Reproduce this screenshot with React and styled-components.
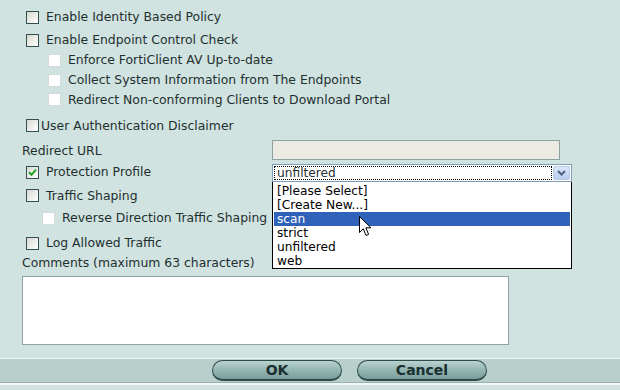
import React from 'react';
import styled, { createGlobalStyle, css } from 'styled-components';

const GlobalStyle = createGlobalStyle`
  html, body {
    margin: 0;
    padding: 0;
    background: #d0e3e1;
  }
  * {
    box-sizing: border-box;
  }
`;

const profiles = ['[Please Select]', '[Create New...]', 'scan', 'strict', 'unfiltered', 'web'];

const CheckMark = () => (
  <svg width="9" height="9" viewBox="0 0 9 9">
    <path d="M1 4.2 L3.5 6.8 L8 1.6" fill="none" stroke="#21a121" strokeWidth="2" />
  </svg>
);

const Pointer = () => (
  <svg width="14" height="22" viewBox="0 0 14 22">
    <path
      d="M0.5 0.5 L0.5 16.5 L4.3 12.8 L7 19.5 L9.6 18.4 L6.9 11.8 L12 11.8 Z"
      fill="#fff"
      stroke="#000"
      strokeWidth="1"
      strokeLinejoin="miter"
    />
  </svg>
);

const App = () => {
  return (
    <Page>
      <GlobalStyle />
      <Form>
        <Row $top={7}>
          <Box $indent={4} />
          <Label $gap={7}>Enable Identity Based Policy</Label>
        </Row>
        <Row $top={3}>
          <Box $indent={4} />
          <Label $gap={7}>Enable Endpoint Control Check</Label>
        </Row>
        <Row>
          <Box $indent={26} $disabled />
          <Label $gap={7}>Enforce FortiClient AV Up-to-date</Label>
        </Row>
        <Row>
          <Box $indent={26} $disabled />
          <Label $gap={7}>Collect System Information from The Endpoints</Label>
        </Row>
        <Row $h={19}>
          <Box $indent={26} $disabled />
          <Label $gap={7}>Redirect Non-conforming Clients to Download Portal</Label>
        </Row>
        <Row $top={6} $h={21}>
          <Box $indent={4} />
          <Label $gap={2}>User Authentication Disclaimer</Label>
        </Row>

        <FieldRow $top={4} $h={21}>
          <CheckCell>
            <Label>Redirect URL</Label>
          </CheckCell>
          <UrlInput />
        </FieldRow>

        <FieldRow $top={1}>
          <CheckCell>
            <Box $indent={4}>
              <CheckMark />
            </Box>
            <Label $gap={7}>Protection Profile</Label>
          </CheckCell>
          <SelectWrap>
            <SelectBox>
              <SelectValue>unfiltered</SelectValue>
              <SelectArrow>
                <svg width="9" height="6" viewBox="0 0 9 6">
                  <path d="M1 1 L4.5 4.5 L8 1" fill="none" stroke="#4d6185" strokeWidth="2" />
                </svg>
              </SelectArrow>
            </SelectBox>
            <OptionList>
              {profiles.map((p) => (
                <Option key={p} $active={p === 'scan'}>
                  {p}
                </Option>
              ))}
            </OptionList>
            <Cursor>
              <Pointer />
            </Cursor>
          </SelectWrap>
        </FieldRow>

        <Row $top={3} $h={21}>
          <Box $indent={4} />
          <Label $gap={7}>Traffic Shaping</Label>
        </Row>
        <Row $top={2}>
          <Box $indent={20} $disabled />
          <Label $gap={7}>Reverse Direction Traffic Shaping</Label>
        </Row>
        <Row $top={5}>
          <Box $indent={4} />
          <Label $gap={7}>Log Allowed Traffic</Label>
        </Row>
        <Row $h={19}>
          <Label>Comments (maximum 63 characters)</Label>
        </Row>
        <Comments />
      </Form>

      <ButtonBar>
        <PillButton>OK</PillButton>
        <PillButton>Cancel</PillButton>
      </ButtonBar>
    </Page>
  );
};

export default App;

const Page = styled.div`
  width: 620px;
  height: 390px;
  background: #d0e3e1;
  font-family: 'DejaVu Sans', Verdana, sans-serif;
  font-size: 12.4px;
  color: #1f2f2f;
  overflow: hidden;
  display: flex;
  flex-direction: column;
`;

const Form = styled.div`
  padding-left: 22px;
  display: flex;
  flex-direction: column;
`;

//////////////////////// rows //////////////////////////

const rowBase = css`
  height: ${(p) => p.$h || 20}px;
  margin-top: ${(p) => p.$top || 0}px;
  display: flex;
  align-items: center;
`;

const Row = styled.div`
  ${rowBase}
`;

const FieldRow = styled.div`
  ${rowBase}
  display: grid;
  grid-template-columns: 250px 1fr;
  align-items: start;
`;

const CheckCell = styled.div`
  height: 100%;
  display: flex;
  align-items: center;
`;

const Label = styled.span`
  margin-left: ${(p) => p.$gap || 0}px;
  white-space: nowrap;
  line-height: 14px;
`;

const Box = styled.span`
  margin-left: ${(p) => p.$indent || 0}px;
  width: 13px;
  height: 13px;
  flex: none;
  display: flex;
  align-items: center;
  justify-content: center;
  border: 1px solid #32504f;
  background: linear-gradient(135deg, #d8d9d2 0%, #eeeeea 55%, #ffffff 100%);
  ${(p) =>
    p.$disabled &&
    css`
      border-color: #d3dcdb;
      background: #ffffff;
    `}
`;

//////////////////////// fields //////////////////////////

const UrlInput = styled.div`
  width: 288px;
  height: 20px;
  border: 1px solid #8fa1a0;
  background: #ebeae3;
`;

const SelectWrap = styled.div`
  position: relative;
  width: 300px;
  height: 100%;
  display: flex;
  align-items: flex-end;
  font-size: 12.2px;
`;

const SelectBox = styled.div`
  width: 300px;
  height: 18px;
  border: 1px solid #7f9db9;
  background: #fff;
  display: flex;
  align-items: stretch;
  padding: 1px;
`;

const SelectValue = styled.div`
  flex: 1;
  border: 1px dotted #000;
  padding-left: 2px;
  line-height: 13px;
`;

const SelectArrow = styled.div`
  width: 17px;
  margin-left: 1px;
  border: 1px solid #b9cbe9;
  border-radius: 2px;
  background: linear-gradient(#dbe6f8, #b9cdef);
  display: flex;
  align-items: center;
  justify-content: center;
`;

const OptionList = styled.div`
  position: absolute;
  top: 100%;
  left: 0;
  width: 300px;
  border: 1px solid #000;
  border-top: none;
  background: #fff;
  padding: 2px 0 0 1px;
  z-index: 2;
`;

const Option = styled.div`
  height: 14px;
  line-height: 15px;
  padding-left: 3px;
  margin-right: 1px;
  color: #000;
  ${(p) =>
    p.$active &&
    css`
      background: #2f62b8;
      color: #fff;
    `}
`;

const Cursor = styled.div`
  position: absolute;
  left: 87px;
  top: 54px;
  z-index: 3;
  line-height: 0;
`;

const Comments = styled.div`
  margin-top: 4px;
  width: 487px;
  height: 69px;
  border: 1px solid #8fa1a0;
  background: #fff;
`;

//////////////////////// button bar //////////////////////////

const ButtonBar = styled.div`
  margin-top: 13px;
  height: 27px;
  border-top: 1px solid #eef5f4;
  border-bottom: 2px solid #f2f7f6;
  box-shadow: inset 0 -1px 0 #97b2af;
  background: #b8cfcc;
  display: flex;
  justify-content: flex-start;
  align-items: center;
  gap: 15px;
  padding: 0 0 1px 212px;
`;

const PillButton = styled.button`
  width: 130px;
  height: 21px;
  padding: 0;
  border: 1px solid #2f4a48;
  border-bottom-width: 2px;
  border-radius: 11px;
  background: linear-gradient(#b9d3d0 0%, #98b9b6 45%, #779d9a 100%);
  font-family: 'DejaVu Sans', Verdana, sans-serif;
  font-weight: bold;
  font-size: 14px;
  color: #1b2f2f;
  line-height: 18px;
  cursor: pointer;
`;
